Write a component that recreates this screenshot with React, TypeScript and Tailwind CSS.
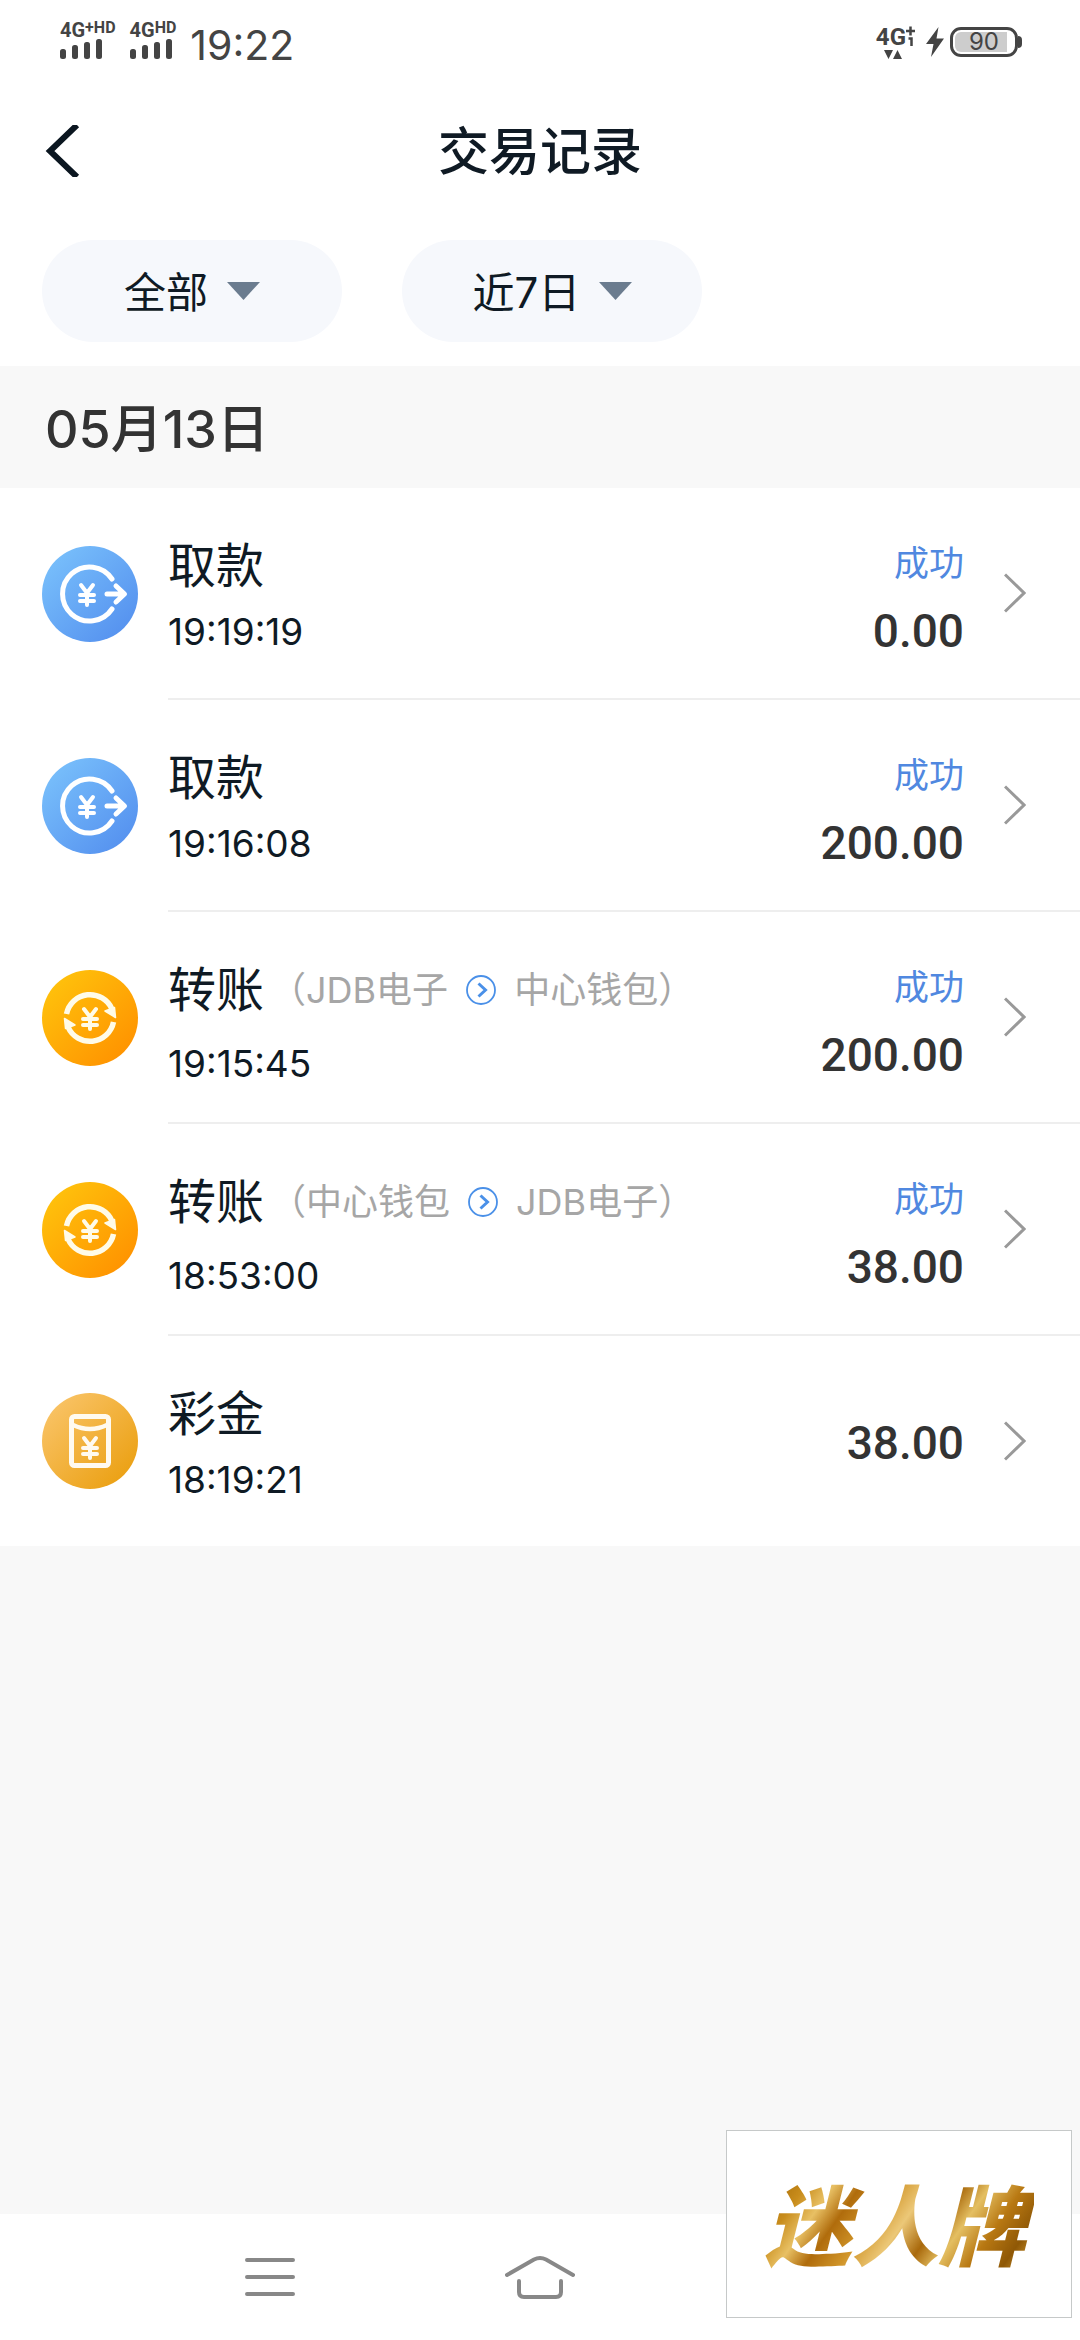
import { ReactNode } from "react";

type Kind = "withdraw" | "transfer" | "bonus";

interface TransactionRecord {
  id: string;
  kind: Kind;
  title: string;
  time: string;
  amount: string;
  status?: string;
  from?: string;
  to?: string;
}

const records: TransactionRecord[] = [
  { id: "1", kind: "withdraw", title: "取款", time: "19:19:19", amount: "0.00", status: "成功" },
  { id: "2", kind: "withdraw", title: "取款", time: "19:16:08", amount: "200.00", status: "成功" },
  { id: "3", kind: "transfer", title: "转账", time: "19:15:45", amount: "200.00", status: "成功", from: "JDB电子", to: "中心钱包" },
  { id: "4", kind: "transfer", title: "转账", time: "18:53:00", amount: "38.00", status: "成功", from: "中心钱包", to: "JDB电子" },
  { id: "5", kind: "bonus", title: "彩金", time: "18:19:21", amount: "38.00" },
];

const gradients: Record<Kind, [string, string]> = {
  withdraw: ["#78bffb", "#5591ef"],
  transfer: ["#ffc20c", "#ff9200"],
  bonus: ["#f9c366", "#eba012"],
};

function Yen({ x, y }: { x: number; y: number }) {
  return (
    <path
      d={`M${x - 6} ${y - 10}l6 8l6 -8M${x} ${y - 2}v12M${x - 7} ${y}h14M${x - 7} ${y + 6}h14`}
      strokeWidth="4"
    />
  );
}

function KindIcon({ kind, id }: { kind: Kind; id: string }) {
  const [start, end] = gradients[kind];
  const fill = `fill-${id}`;
  return (
    <svg viewBox="0 0 96 96" className="size-24 shrink-0" aria-hidden="true">
      <defs>
        <linearGradient id={fill} x1="0.1" y1="0.1" x2="0.9" y2="0.9">
          <stop stopColor={start} />
          <stop offset="1" stopColor={end} />
        </linearGradient>
      </defs>
      <circle cx="48" cy="48" r="48" fill={`url(#${fill})`} />
      <g fill="none" stroke="#fff" strokeLinecap="round" strokeLinejoin="round">
        {kind === "withdraw" && (
          <>
            <path d="M70 33A27 27 0 1 0 70 63" strokeWidth="5" />
            <path d="M65 48h17M74 40l8.500 8l-8.500 8" strokeWidth="5" />
            <Yen x={45} y={49} />
          </>
        )}
        {kind === "transfer" && (
          <g stroke="#fffbe8">
            <path d="M24.500 44A24 24 0 0 1 70 39" strokeWidth="5.500" strokeLinecap="butt" />
            <path d="M71.500 52A24 24 0 0 1 26 57" strokeWidth="5.500" strokeLinecap="butt" />
            <path d="M63 41l10.500 6.500l-1 -10z" fill="#fffbe8" strokeWidth="1.500" />
            <path d="M33 55l-10.500 -6.500l1 10z" fill="#fffbe8" strokeWidth="1.500" />
            <Yen x={48} y={49} />
          </g>
        )}
        {kind === "bonus" && (
          <g stroke="#fffaf0">
            <rect x="29.500" y="23.500" width="37" height="49" rx="3" strokeWidth="5" />
            <path d="M31 32Q48 40 65 32" strokeWidth="4.500" />
            <Yen x={48} y={55} />
          </g>
        )}
      </g>
    </svg>
  );
}

function SignalBars() {
  return (
    <svg viewBox="0 0 42 20" className="mt-px h-5 w-[42px]" fill="#444" aria-hidden="true">
      <rect x="0" y="10" width="6" height="10" rx="2.500" />
      <rect x="12" y="6" width="6" height="14" rx="2.500" />
      <rect x="24" y="3" width="6" height="17" rx="2.500" />
      <rect x="36" y="0" width="6" height="20" rx="2.500" />
    </svg>
  );
}

function Signal({ children }: { children: ReactNode }) {
  return (
    <div className="flex flex-col font-[Roboto,sans-serif] font-bold">
      <div className="flex h-4 items-start text-xl leading-4">{children}</div>
      <SignalBars />
    </div>
  );
}

function StatusBar() {
  return (
    <div className="flex h-[84px] items-center justify-between pr-[58px] pl-[60px] text-[#444]">
      <div className="flex items-center">
        <div className="flex gap-3.5 pb-1">
          <Signal>
            4G<span className="text-base leading-[11px]">+HD</span>
          </Signal>
          <Signal>
            4G<span className="text-base leading-[11px]">HD</span>
          </Signal>
        </div>
        <time className="ml-3.5 pt-1.5 text-[41px] leading-10">19:22</time>
      </div>
      <div className="flex items-center gap-2.5">
        <div className="flex flex-col font-[Roboto,sans-serif] font-bold">
          <div className="flex h-[22px] text-2xl leading-[22px]">
            4G
            <svg viewBox="0 0 10 20" className="h-5 w-[10px]" fill="none" stroke="#444" strokeWidth="2.500" aria-hidden="true">
              <path d="M0 5h9M4.500 0.500v9M2.500 12.500h3V20" />
            </svg>
          </div>
          <svg viewBox="0 0 18 9" className="mt-0.5 ml-2 h-[9px] w-[18px]" fill="#444" aria-hidden="true">
            <path d="M0 0h9L4.500 9zM9 9h9L13.500 0z" />
          </svg>
        </div>
        <div className="flex items-center gap-1.5">
          <svg viewBox="0 0 18 30" className="h-[30px] w-[18px]" fill="#444" aria-hidden="true">
            <path d="M12.500 0L0 17h7.500L5 30L18 11.500h-7.500z" />
          </svg>
          <div className="flex items-center">
            <div className="h-[30px] w-[68px] rounded-[11px] border-[3px] border-[#444] p-0.5">
              <div className="flex h-full w-[52px] items-center justify-center rounded-l-md bg-[#cdcdcd] pl-1.5 text-2xl leading-5">90</div>
            </div>
            <div className="h-3 w-1 rounded-r-sm bg-[#444]" />
          </div>
        </div>
      </div>
    </div>
  );
}

function FilterSelect({ label, value }: { label: string; value: string }) {
  return (
    <label className="flex h-[102px] w-[300px] items-center justify-center gap-[18px] rounded-full bg-[#f6f8fc]">
      <select aria-label={label} className="appearance-none bg-transparent pt-1 text-[42px] leading-[56px] text-[#0f1a24] outline-none">
        <option>{value}</option>
      </select>
      <svg viewBox="0 0 33 18" className="h-[18px] w-[33px]" fill="#6b7c8f" aria-hidden="true">
        <path d="M0 0h33L16.500 18z" />
      </svg>
    </label>
  );
}

function TransferRoute({ from, to }: { from: string; to: string }) {
  return (
    <span className="ml-1.5 flex items-center text-4xl leading-[50px] text-[#a6a6a6]">
      （{from}
      <svg viewBox="0 0 30 30" className="mx-[18px] size-[30px]" fill="none" stroke="#4a90e8" aria-hidden="true">
        <circle cx="15" cy="15" r="14" strokeWidth="1.800" />
        <path d="M12.500 8.500l7 6.500l-7 6.500" strokeWidth="3" />
      </svg>
      {to}）
    </span>
  );
}

function RecordRow({ record }: { record: TransactionRecord }) {
  const { id, kind, title, time, amount, status, from, to } = record;
  return (
    <li className="group flex items-center pl-[42px]">
      <KindIcon kind={kind} id={id} />
      <div className="ml-[30px] flex h-[212px] flex-1 justify-between border-b-2 border-[#eee] pr-[54px] group-last:h-[210px] group-last:border-b-0">
        <div className="pt-[54px] text-[#0f1a24]">
          <div className="flex h-12 items-center">
            <span className="text-5xl leading-[48px]">{title}</span>
            {from && to && <TransferRoute from={from} to={to} />}
          </div>
          <time className={`block text-[37px] leading-10 ${from ? "mt-[30px]" : "mt-[22px]"}`}>{time}</time>
        </div>
        <div className="flex items-center">
          <div className="pt-1 text-right">
            {status && <div className="mb-4 text-[35px] leading-14 text-[#5088e0]">{status}</div>}
            <div className="font-[Roboto,sans-serif] text-[46px] leading-12 font-medium text-[#333]">{amount}</div>
          </div>
          <svg viewBox="0 0 22 40" className="ml-10 h-10 w-[22px]" fill="none" stroke="#999" strokeWidth="3" aria-hidden="true">
            <path d="M1 1.500L20 20L1 38.500" />
          </svg>
        </div>
      </div>
    </li>
  );
}

function NavBar() {
  return (
    <nav className="grid h-[126px] grid-cols-3 items-center justify-items-center bg-white px-[12.5%]">
      <button aria-label="菜单">
        <svg viewBox="0 0 50 38" className="h-[38px] w-[50px]" fill="none" stroke="#888" strokeWidth="4" strokeLinecap="round">
          <path d="M2 2h46M2 19h46M2 36h46" />
        </svg>
      </button>
      <button aria-label="主页">
        <svg viewBox="0 0 70 44" className="h-11 w-[70px]" fill="none" stroke="#888" strokeWidth="4" strokeLinecap="round">
          <path d="M2 20L29 4.500Q35 1.500 41 4.500L68 20" />
          <path d="M14 26v11q0 5 5 5h32q5 0 5 -5v-11" />
        </svg>
      </button>
    </nav>
  );
}

export default function App() {
  return (
    <div className="relative flex min-h-screen flex-col bg-[#f8f8f8] font-[Inter,'Noto_Sans_CJK_SC',sans-serif]">
      <header className="bg-white">
        <StatusBar />
        <div className="grid h-[134px] grid-cols-[1fr_auto_1fr] items-center px-[45px]">
          <button aria-label="返回" className="justify-self-start">
            <svg viewBox="0 0 35 52" className="h-[52px] w-[35px]" fill="none" stroke="#0b1620" strokeWidth="6">
              <path d="M32 0L5 26L32 52" />
            </svg>
          </button>
          <h1 className="pt-0.5 text-[51px] leading-[64px] font-medium text-[#0f1a24]">交易记录</h1>
        </div>
        <div className="flex gap-[60px] px-[42px] pt-[22px] pb-6">
          <FilterSelect label="类型" value="全部" />
          <FilterSelect label="日期" value="近7日" />
        </div>
      </header>
      <main className="flex-1">
        <h2 className="flex h-[122px] items-center px-[45px] pt-1.5 text-[52px] font-medium text-[#333]">05月13日</h2>
        <ul className="bg-white">
          {records.map((record) => (
            <RecordRow key={record.id} record={record} />
          ))}
        </ul>
      </main>
      <NavBar />
      <div className="absolute right-2 bottom-[22px] flex h-[188px] w-[346px] items-center justify-center border border-[#c6c9c9] bg-white pt-2">
        <span className="bg-[linear-gradient(125deg,#a86c08_4%,#c98d1c_14%,#e8c064_22%,#b06c0c_30%,#d09428_40%,#ecc878_50%,#a9690c_60%,#e4bf62_68%,#b87812_78%,#8f5806_88%,#cf9a32_96%)] bg-clip-text pr-2 text-[87px] leading-[104px] font-black text-transparent italic">
          迷人牌
        </span>
      </div>
    </div>
  );
}
